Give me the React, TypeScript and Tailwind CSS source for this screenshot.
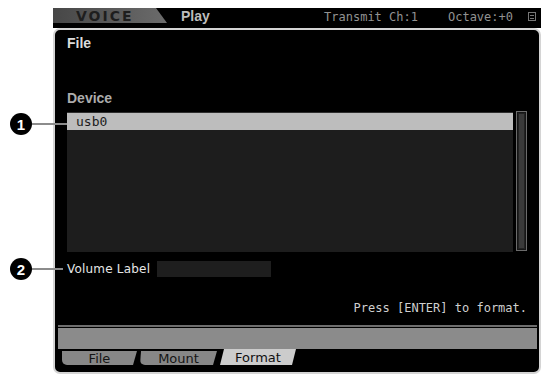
const mono = { fontFamily: '"DejaVu Sans Mono", "Liberation Mono", monospace' };

const Badge = ({ n, top, lineEnd }: { n: string; top: number; lineEnd: number }) => (
  <div className="absolute left-[10px] flex items-center" style={{ top }}>
    <div className="w-[22px] h-[22px] rounded-full bg-black text-white flex items-center justify-center text-[15px] font-bold font-['Liberation_Sans',Arial,sans-serif] leading-none">
      {n}
    </div>
    <div className="h-[2px] bg-[#8c8c8c]" style={{ width: lineEnd - 32 }}></div>
  </div>
);

const tabs = [
  { label: 'File', w: 'w-[75px]', active: false, shape: '[clip-path:polygon(0_0,100%_0,calc(100%_-_4px)_100%,0_100%)] rounded-bl-[5px]' },
  { label: 'Mount', w: 'w-[77px]', active: false, shape: '[clip-path:polygon(1px_0,100%_0,calc(100%_-_4px)_100%,0_100%)] rounded-bl-[5px]' },
  { label: 'Format', w: 'w-[76px]', active: true, shape: '[clip-path:polygon(4px_0,100%_0,calc(100%_-_4px)_100%,0_100%)]' },
];

export default function App() {
  return (
    <div className="relative w-[548px] h-[379px] bg-white overflow-hidden pl-[53px] pt-[8px] font-['Liberation_Sans',Arial,sans-serif]">
      {/* Screen */}
      <div className="w-[488px] flex flex-col">
        {/* Top bar */}
        <div className="h-[20px] bg-black flex items-start">
          <div className="h-[15px] w-[114px] bg-[linear-gradient(to_right,#474747,#6b6b6b)] [clip-path:polygon(0_0,calc(100%_-_11px)_0,100%_100%,0_100%)] flex items-center pl-[23px]">
            <span className="text-[14px] font-bold text-[#1e1e1e] tracking-[2px] leading-none font-['DejaVu_Sans',sans-serif]">VOICE</span>
          </div>
          <span className="ml-[14px] mt-[1px] text-[14px] font-bold text-[#bdbdbd] leading-[14px]">Play</span>
          <span className="ml-auto mt-[2px] text-[12px] text-[#929292] leading-[14px]" style={mono}>Transmit Ch:1</span>
          <span className="ml-[30px] mt-[2px] text-[12px] text-[#929292] leading-[14px]" style={mono}>Octave:+0</span>
          <div className="ml-[15px] mr-[5px] mt-[4px] w-[8px] h-[9px] border border-[#777] flex flex-col justify-center gap-[2px] px-[1px]">
            <div className="h-px bg-[#777]"></div>
            <div className="h-px bg-[#777]"></div>
          </div>
        </div>

        {/* Panel */}
        <div className="h-[346px] bg-black border-2 border-[#d4d4d4] rounded-[7px] flex flex-col px-[12px]">
          <div className="mt-[5px] h-[16px] text-[14px] font-bold text-[#dcdcdc] leading-[16px]">File</div>
          <div className="mt-[39px] h-[16px] text-[14px] font-bold text-[#acacac] leading-[16px]">Device</div>

          <div className="mt-[5px] flex items-start gap-[3px]">
            <div className="mt-[1px] w-[446px] h-[140px] bg-[#1d1d1d] border-t border-[#2e2e2e]">
              <div className="h-[17px] bg-[#bdbdbd] flex items-center pl-[9px] text-[13px] text-[#1c1c1c]" style={mono}>
                usb0
              </div>
            </div>
            <div className="w-[11px] h-[140px] border border-[#6c6c6c] bg-[#151515] p-[1px]">
              <div className="w-full h-full bg-[#3a3a3a] border border-[#222]"></div>
            </div>
          </div>

          <div className="mt-[9px] h-[16px] flex items-center">
            <span className="text-[12px] text-[#e6e6e6] leading-none tracking-[0.2px] font-['DejaVu_Sans',sans-serif]">Volume Label</span>
            <div className="ml-[7px] w-[114px] h-[16px] bg-[#1e1e1e]"></div>
          </div>

          <div className="mt-[23px] h-[16px] text-right text-[12px] text-[#cfcfcf] leading-[16px]" style={mono}>
            Press [ENTER] to format.
          </div>

          {/* Bottom bar and tabs */}
          <div className="mt-[9px] -ml-[9px] -mr-[10px] flex flex-col">
            <div className="h-[2px] bg-[#6e6e6e]"></div>
            <div className="mt-[1px] h-[21px] bg-[#8b8b8b]"></div>
            <div className="h-[16px] flex items-start pl-[4px] gap-[3px]">
              {tabs.map((t) => (
                <div
                  key={t.label}
                  className={`${t.w} ${t.shape} ${t.active ? 'h-[16px] bg-[#cccccc] text-[#111]' : 'mt-[2px] h-[14px] bg-[#878787] text-[#151515]'} flex items-center justify-center text-[13px] leading-none font-['DejaVu_Sans',sans-serif]`}
                >
                  {t.label}
                </div>
              ))}
            </div>
          </div>
        </div>
      </div>

      {/* Callouts */}
      <Badge n="1" top={113} lineEnd={67} />
      <Badge n="2" top={258} lineEnd={63} />
    </div>
  );
}
